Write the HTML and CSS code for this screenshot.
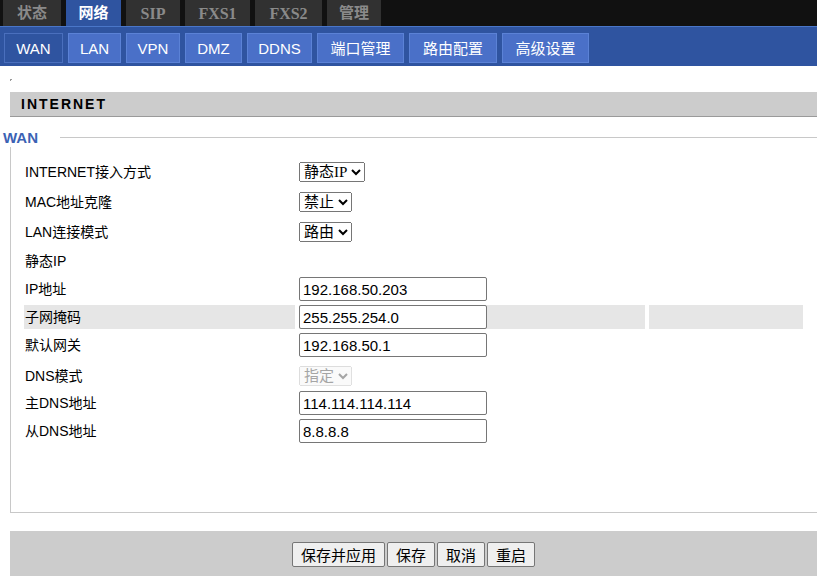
FILE: index.html
```html
<!DOCTYPE html>
<html lang="zh-CN">
<head>
<meta charset="utf-8">
<title>网络 - WAN</title>
<link rel="stylesheet" href="styles.css">
</head>
<body>
<div class="topbar">
  <div class="tab">状态</div>
  <div class="tab active">网络</div>
  <div class="tab latin">SIP</div>
  <div class="tab latin">FXS1</div>
  <div class="tab latin">FXS2</div>
  <div class="tab">管理</div>
</div>
<div class="subbar">
  <div class="stab active">WAN</div>
  <div class="stab">LAN</div>
  <div class="stab">VPN</div>
  <div class="stab">DMZ</div>
  <div class="stab">DDNS</div>
  <div class="stab">端口管理</div>
  <div class="stab">路由配置</div>
  <div class="stab">高级设置</div>
</div>
<div class="content">
  <div class="mark"></div>
  <div class="section-head">INTERNET</div>
  <div class="legend-row"><span class="legend">WAN</span><span class="legend-line"></span></div>
  <div class="box">
    <table class="form">
      <colgroup><col class="c1"><col class="c2"><col class="c3"></colgroup>
      <tr class="r-sel"><td class="lbl">INTERNET接入方式</td><td><select class="sel"><option>静态IP</option></select></td><td></td></tr>
      <tr class="r-sel"><td class="lbl">MAC地址克隆</td><td><select class="sel"><option>禁止</option></select></td><td></td></tr>
      <tr class="r-sel"><td class="lbl">LAN连接模式</td><td><select class="sel"><option>路由</option></select></td><td></td></tr>
      <tr class="r-in"><td class="lbl">静态IP</td><td></td><td></td></tr>
      <tr class="r-in"><td class="lbl">IP地址</td><td><input class="txt" type="text" value="192.168.50.203"></td><td></td></tr>
      <tr class="r-in hl"><td class="lbl">子网掩码</td><td><input class="txt" type="text" value="255.255.254.0"></td><td></td></tr>
      <tr class="r-in"><td class="lbl">默认网关</td><td><input class="txt" type="text" value="192.168.50.1"></td><td></td></tr>
      <tr class="r-gap"><td></td><td></td><td></td></tr>
      <tr class="r-dns"><td class="lbl">DNS模式</td><td><select class="sel" disabled><option>指定</option></select></td><td></td></tr>
      <tr class="r-in"><td class="lbl">主DNS地址</td><td><input class="txt" type="text" value="114.114.114.114"></td><td></td></tr>
      <tr class="r-in"><td class="lbl">从DNS地址</td><td><input class="txt" type="text" value="8.8.8.8"></td><td></td></tr>
    </table>
  </div>
  <div class="actions">
    <button class="btn">保存并应用</button>
    <button class="btn">保存</button>
    <button class="btn">取消</button>
    <button class="btn">重启</button>
  </div>
</div>
</body>
</html>
```
FILE: styles.css
```css
html, body {
  margin: 0;
  padding: 0;
  background: #ffffff;
  overflow: hidden;
}
body {
  font-family: "Liberation Sans", "Noto Sans CJK SC", sans-serif;
  font-size: 14px;
  color: #000;
}

/* top tabs */
.topbar {
  height: 26px;
  background: #111111;
  display: flex;
  gap: 5px;
  padding-left: 3px;
}
.tab {
  height: 26px;
  background: #313131;
  color: #8a8a8a;
  font-family: "Liberation Serif", "Noto Sans CJK SC", serif;
  font-weight: bold;
  font-size: 15px;
  line-height: 27px;
  text-align: center;
  box-sizing: border-box;
}
.tab.latin {
  font-size: 16px;
  line-height: 28px;
}
.tab:nth-child(1) { width: 58px; }
.tab:nth-child(2) { width: 55px; }
.tab:nth-child(3) { width: 54px; }
.tab:nth-child(4) { width: 65px; }
.tab:nth-child(5) { width: 67px; }
.tab:nth-child(6) { width: 54px; }
.tab.active {
  background: #2f54a0;
  color: #ffffff;
}

/* sub tabs */
.subbar {
  height: 40px;
  box-sizing: border-box;
  background: #2f54a0;
  border-top: 1px solid #4a76c8;
  display: flex;
  gap: 5px;
  padding: 6px 0 0 4px;
}
.stab {
  height: 30px;
  box-sizing: border-box;
  background: #4a70c8;
  border: 1px solid #5b82d6;
  color: #ffffff;
  font-size: 15px;
  line-height: 29px;
  text-align: center;
}
.stab:nth-child(1) { width: 59px; }
.stab:nth-child(2) { width: 53px; }
.stab:nth-child(3) { width: 54px; }
.stab:nth-child(4) { width: 57px; }
.stab:nth-child(5) { width: 65px; }
.stab:nth-child(6) { width: 87px; }
.stab:nth-child(7) { width: 88px; }
.stab:nth-child(8) { width: 87px; }
.stab.active {
  background: #2f54a0;
  border-color: #4a6fbd;
}

/* content */
.content {
  margin-left: 10px;
}
.mark {
  width: 3px;
  height: 3px;
  margin-top: 13px;
  background: linear-gradient(135deg, #9a9a9a 50%, transparent 50%);
}
.section-head {
  margin-top: 10px;
  height: 25px;
  box-sizing: border-box;
  background: #cccccc;
  border-bottom: 1px solid #9a9a9a;
  padding-left: 11px;
  font-size: 14px;
  font-weight: bold;
  letter-spacing: 2px;
  line-height: 24px;
  color: #000;
}
.legend-row {
  display: flex;
  align-items: center;
  height: 19px;
  margin-top: 11px;
  margin-left: -7px;
}
.legend {
  width: 57px;
  color: #3b62b4;
  font-weight: bold;
  font-size: 15px;
  line-height: 21px;
}
.legend-line {
  flex: 1;
  height: 1px;
  background: #c8c8c8;
}
.box {
  height: 366px;
  box-sizing: border-box;
  border-left: 1px solid #c8c8c8;
  border-bottom: 1px solid #c8c8c8;
  padding: 8px 0 0 9px;
}
.form {
  border-collapse: separate;
  border-spacing: 4px;
  width: 787px;
  table-layout: fixed;
}
.c1 { width: 271px; }
.c2 { width: 346px; }
.c3 { width: 154px; }
.form td {
  padding: 0;
  vertical-align: middle;
  white-space: nowrap;
}
.form td.lbl {
  padding-left: 1px;
  font-size: 14px;
  line-height: 18px;
}
.r-sel { height: 26px; }
.r-in { height: 24px; }
.r-dns { height: 22px; }
.r-gap { height: 0; }
.r-gap td { height: 0; line-height: 0; }
.hl td { background: #e6e6e6; }

.sel {
  font-family: "Liberation Serif", "Noto Sans CJK SC", serif;
  font-size: 15px;
  height: 20px;
  padding: 0;
  margin: 0;
  vertical-align: middle;
}
.txt {
  box-sizing: border-box;
  width: 188px;
  height: 24px;
  margin: 0;
  padding: 1px 3px;
  font-family: "Liberation Sans", "Noto Sans CJK SC", sans-serif;
  font-size: 15px;
  border: 1px solid #767676;
  border-radius: 2px;
  vertical-align: middle;
  display: block;
}

/* actions */
.actions {
  margin-top: 18px;
  height: 46px;
  background: #cccccc;
  display: flex;
  justify-content: center;
  gap: 2px;
  padding-top: 11px;
  box-sizing: border-box;
  align-items: flex-start;
}
.btn {
  height: 25px;
  padding: 0 8px;
  margin: 0;
  font-family: "Noto Sans CJK SC", sans-serif;
  font-size: 15px;
  line-height: 20px;
  background: #efefef;
  border: 1px solid #767676;
  border-radius: 2px;
  color: #000;
}
```
